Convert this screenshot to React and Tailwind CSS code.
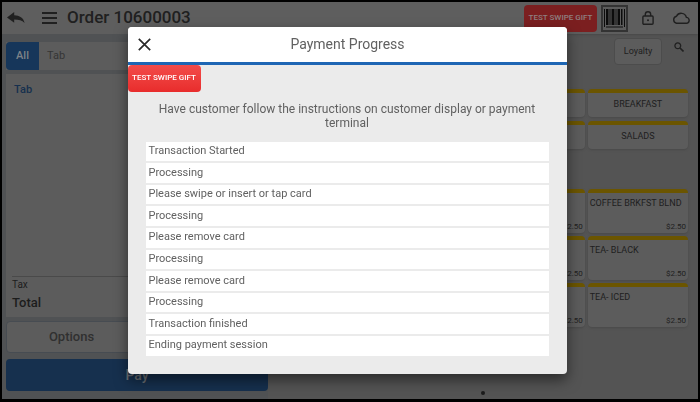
import React, { useState } from "react";

const MESSAGES = [
  "Transaction Started",
  "Processing",
  "Please swipe or insert or tap card",
  "Processing",
  "Please remove card",
  "Processing",
  "Please remove card",
  "Processing",
  "Transaction finished",
  "Ending payment session",
];

const CATEGORIES = ["", "", "", "BREAKFAST", "", "", "", "SALADS"];

const ITEMS = [
  { name: "", price: "$2.50" },
  { name: "", price: "$2.50" },
  { name: "", price: "$2.50" },
  { name: "COFFEE BRKFST BLND", price: "$2.50" },
  { name: "", price: "$2.50" },
  { name: "", price: "$2.50" },
  { name: "", price: "$2.50" },
  { name: "TEA- BLACK", price: "$2.50" },
  { name: "", price: "$2.50" },
  { name: "", price: "$2.50" },
  { name: "", price: "$2.50" },
  { name: "TEA- ICED", price: "$2.50" },
];

const BackIcon = () => (
  <svg width="18" height="12" viewBox="0 0 18 12" fill="currentColor" aria-hidden="true">
    <path d="M7.200 0v3.200c5.400.2 9.300 2.500 10.400 7.800-2.600-2.700-5.600-3.500-10.400-3.500v3.300L0 5.400z" />
  </svg>
);

const MenuIcon = () => (
  <svg width="15" height="12" viewBox="0 0 15 12" fill="currentColor" aria-hidden="true">
    <path d="M0 0h15v2H0zM0 5h15v2H0zM0 10h15v2H0z" />
  </svg>
);

const BarcodeIcon = () => (
  <svg width="27" height="27" viewBox="0 0 27 27" aria-hidden="true">
    <rect width="27" height="27" fill="#333" />
    <rect x="2" y="2" width="23" height="23" fill="#5c5c5c" />
    <path
      fill="#0c0c0c"
      d="M3 4h1v18H3zM5 4h2.500v16H5zM8.500 4h1v16h-1zM10.500 4h3v16h-3zM14.500 4h1v16h-1zM16.500 4h2.500v16h-2.500zM20 4h1.500v16H20zM23 4h1v18h-1zM5 21.500h17v1H5z"
    />
  </svg>
);

const LockIcon = () => (
  <svg width="12" height="14" viewBox="0 0 12 14" fill="none" stroke="currentColor" strokeWidth="1.400" aria-hidden="true">
    <rect x=".9" y="5" width="10.200" height="8.200" rx="1" />
    <path d="M3.300 5V3.400a2.700 2.700 0 0 1 5.400 0V5" />
    <circle cx="6" cy="9.200" r="1" fill="currentColor" stroke="none" />
  </svg>
);

const CloudIcon = () => (
  <svg width="18" height="12" viewBox="0 0 18 12" fill="none" stroke="currentColor" strokeWidth="1.400" aria-hidden="true">
    <path d="M4.400 11.200h9.700a2.900 2.900 0 0 0 .3-5.800A5.300 5.300 0 0 0 4.500 4.200a3.600 3.600 0 0 0-.1 7z" />
  </svg>
);

const SearchIcon = () => (
  <svg width="10" height="10" viewBox="0 0 10 10" fill="none" stroke="currentColor" strokeWidth="1.300" aria-hidden="true">
    <circle cx="3.800" cy="3.800" r="2.900" />
    <path d="M6 6l3.500 3.500" strokeWidth="1.600" />
  </svg>
);

const CloseIcon = () => (
  <svg width="13" height="13" viewBox="0 0 13 13" fill="none" stroke="currentColor" strokeWidth="1.700" aria-hidden="true">
    <path d="M.8.8l11.400 11.400M12.200.8L.8 12.200" />
  </svg>
);

const Header = () => (
  <header className="flex h-8 items-center bg-[#5e5e5e] pl-1 pr-2 text-[#202020] shadow-sm">
    <button aria-label="Back" className="p-px">
      <BackIcon />
    </button>
    <button aria-label="Menu" className="ml-4">
      <MenuIcon />
    </button>
    <h1 className="ml-2.5 flex-1 text-[17px] font-medium">Order 10600003</h1>
    <button className="h-[27px] w-[73px] rounded-sm bg-[#7b1f20] text-[8px] font-medium text-[#8f8080]">
      TEST SWIPE GIFT
    </button>
    <button aria-label="Scan barcode" className="ml-1">
      <BarcodeIcon />
    </button>
    <button aria-label="Lock" className="ml-3.5">
      <LockIcon />
    </button>
    <button aria-label="Sync" className="ml-[18px]">
      <CloudIcon />
    </button>
  </header>
);

const OrderPanel = () => (
  <section className="flex w-[266px] shrink-0 flex-col bg-[#505254] pb-2 pl-1 pt-2">
    <div className="flex h-7 bg-[#5c5c5c] text-[11px] text-[#353535]">
      <button className="w-[33px] rounded-l-sm bg-[#16365a] font-medium text-[#7d8288]">All</button>
      <button className="px-2">Tab</button>
    </div>
    <div className="mt-1 flex flex-1 flex-col bg-[#5c5c5c] px-1.5">
      <h2 className="ml-0.5 mt-2 text-[11px] font-medium text-[#16304e]">Tab</h2>
      <div className="mt-auto border-t border-[#4a4a4a] pb-1 text-[#1c1c1c]">
        <p className="text-[10px] leading-4">Tax</p>
        <p className="text-[13px] font-medium leading-5">Total</p>
      </div>
    </div>
    <div className="mt-1 flex gap-1">
      <button className="h-8 w-1/2 rounded-sm border border-[#474c52] bg-[#5c5c5c] text-[13px] font-medium text-[#303030]">
        Options
      </button>
    </div>
    <button className="mt-1.5 h-8 rounded-sm bg-[#16304e] text-sm font-medium text-[#6c7075]">Pay</button>
  </section>
);

const Menu = () => (
  <section className="flex flex-1 flex-col pl-2.5 pr-2.5 pt-1 text-[#202020]">
    <div className="flex items-start justify-end gap-3 pr-1">
      <button className="h-[27px] w-12 rounded-sm border border-[#4c4c4c] bg-[#5c5c5c] text-[9px]">Loyalty</button>
      <button aria-label="Search" className="mt-1">
        <SearchIcon />
      </button>
    </div>
    <div className="mt-6 grid grid-cols-4 gap-x-[3px] gap-y-1">
      {CATEGORIES.map((name, i) => (
        <button key={i} className="h-7 rounded-sm border-t-4 border-[#6b5500] bg-[#5c5c5c] text-[9px] shadow-sm">
          {name}
        </button>
      ))}
    </div>
    <div className="mt-10 grid grid-cols-4 gap-[3px]">
      {ITEMS.map((item, i) => (
        <button
          key={i}
          className="flex h-11 flex-col items-start justify-between rounded-sm border-t-4 border-[#6b5500] bg-[#5c5c5c] px-0.5 pt-1 shadow-sm"
        >
          <span className="whitespace-nowrap text-[9px] leading-3">{item.name}</span>
          <span className="self-end text-[8px] leading-3">{item.price}</span>
        </button>
      ))}
    </div>
    <span className="mb-1 mt-auto size-1 self-center rounded-full bg-[#1c1c1c]" />
  </section>
);

const PaymentDialog = ({ onClose }) => (
  <div className="fixed inset-0 flex items-center justify-center pb-0.5 pr-1.5">
    <div
      role="dialog"
      aria-labelledby="payment-title"
      className="w-full max-w-[439px] overflow-hidden rounded-sm bg-[#ebebeb] pb-[18px] text-[#616161] shadow-[0_6px_14px_rgba(0,0,0,0.5)]"
    >
      <div className="flex h-[38px] items-center border-b-3 border-[#1e66b4] bg-white px-2.5">
        <button aria-label="Close" onClick={onClose} className="text-[#2a2a2a]">
          <CloseIcon />
        </button>
        <h2 id="payment-title" className="flex-1 pr-3 text-center text-sm">
          Payment Progress
        </h2>
      </div>
      <button className="block h-[27px] w-[73px] rounded-sm bg-linear-to-b from-[#f34b49] to-[#e82c2c] text-[8px] font-medium text-white">
        TEST SWIPE GIFT
      </button>
      <p className="mx-6 mt-2.5 text-center text-xs leading-[14px]">
        Have customer follow the instructions on customer display or payment terminal
      </p>
      <ul className="mx-[18px] mt-3 grid h-[214px] auto-rows-fr gap-0.5 text-[11px]">
        {MESSAGES.map((message, i) => (
          <li key={i} className="flex items-center bg-white px-[3px]">
            {message}
          </li>
        ))}
      </ul>
    </div>
  </div>
);

const App = () => {
  const [open, setOpen] = useState(true);

  return (
    <div className="flex min-h-screen flex-col border-2 border-b-3 border-black bg-[#545454] font-[Roboto,sans-serif]">
      <Header />
      <main className="flex flex-1">
        <OrderPanel />
        <Menu />
      </main>
      {open && <PaymentDialog onClose={() => setOpen(false)} />}
    </div>
  );
};

export default App;
